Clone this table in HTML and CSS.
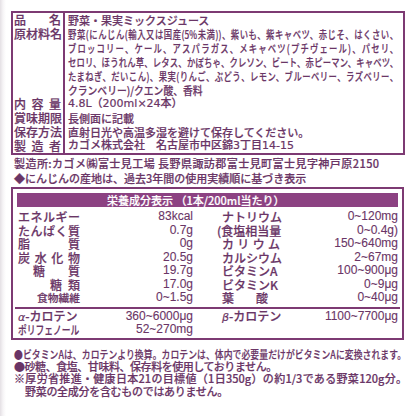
FILE: index.html
```html
<!DOCTYPE html>
<html lang="ja">
<head>
<meta charset="utf-8">
<title>野菜・果実ミックスジュース</title>
<link rel="stylesheet" href="styles.css">
</head>
<body>
<div class="page">
  <div class="spec">
    <div class="lbl">品名</div>
    <div class="val">野菜・果実ミックスジュース</div>

    <div class="lbl">原材料名</div>
    <div class="val">
      <div class="fit"><span class="fit-in">野菜(にんじん(輸入又は国産(5%未満))、紫いも、紫キャベツ、赤じそ、はくさい、</span></div>
      <div class="fit"><span class="fit-in">ブロッコリー、ケール、アスパラガス、メキャベツ(プチヴェール)、パセリ、</span></div>
      <div class="fit"><span class="fit-in">セロリ、ほうれん草、レタス、かぼちゃ、クレソン、ビート、赤ピーマン、キャベツ、</span></div>
      <div class="fit"><span class="fit-in">たまねぎ、だいこん)、果実(りんご、ぶどう、レモン、ブルーベリー、ラズベリー、</span></div>
      <div class="fit"><span class="fit-in short">クランベリー)/クエン酸、香料</span></div>
    </div>

    <div class="lbl">内容量</div>
    <div class="val latin">4.8L（200ml×24本）</div>

    <div class="lbl">賞味期限</div>
    <div class="val">長側面に記載</div>

    <div class="lbl">保存方法</div>
    <div class="val">直射日光や高温多湿を避けて保存してください。</div>

    <div class="lbl">製造者</div>
    <div class="val latin">カゴメ株式会社　名古屋市中区錦3丁目14-15</div>
  </div>

  <div class="maker">
    <div class="mline wide">製造所:カゴメ㈱富士見工場 長野県諏訪郡富士見町富士見字神戸原2150</div>
    <div class="mline">◆にんじんの産地は、過去3年間の使用実績順に基づき表示</div>
  </div>

  <div class="nutri">
    <div class="nhead">栄養成分表示 （1本/200ml当たり）</div>
    <div class="ncols">
      <div class="ncol nleft">
        <div class="nrow"><span class="nl">エネルギー</span><span class="nv">83kcal</span></div>
        <div class="nrow"><span class="nl">たんぱく質</span><span class="nv">0.7g</span></div>
        <div class="nrow"><span class="nl">脂質</span><span class="nv">0g</span></div>
        <div class="nrow"><span class="nl">炭水化物</span><span class="nv">20.5g</span></div>
        <div class="nrow"><span class="nl i1">糖質</span><span class="nv">19.7g</span></div>
        <div class="nrow"><span class="nl i2">糖類</span><span class="nv">17.0g</span></div>
        <div class="nrow"><span class="nl i3">食物繊維</span><span class="nv">0~1.5g</span></div>
      </div>
      <div class="ncol nright">
        <div class="nrow"><span class="nl">ナトリウム</span><span class="nv">0~120mg</span></div>
        <div class="nrow"><span class="nl paren">(食塩相当量</span><span class="nv">0~0.4g)</span></div>
        <div class="nrow"><span class="nl">カリウム</span><span class="nv">150~640mg</span></div>
        <div class="nrow"><span class="nl">カルシウム</span><span class="nv">2~67mg</span></div>
        <div class="nrow"><span class="nl free">ビタミンA</span><span class="nv">100~900μg</span></div>
        <div class="nrow"><span class="nl free">ビタミンK</span><span class="nv">0~9μg</span></div>
        <div class="nrow"><span class="nl narrow">葉酸</span><span class="nv">0~40μg</span></div>
      </div>
    </div>
    <div class="ncols extra">
      <div class="ncol nleft">
        <div class="nrow"><span class="nl free"><i class="gk">α</i>-カロテン</span><span class="nv">360~6000μg</span></div>
        <div class="nrow"><span class="nl free"><span class="squeeze">ポリフェノール</span></span><span class="nv">52~270mg</span></div>
      </div>
      <div class="ncol nright">
        <div class="nrow"><span class="nl free"><i class="gk">β</i>-カロテン</span><span class="nv">1100~7700μg</span></div>
      </div>
    </div>
  </div>

  <div class="notes">
    <div class="note"><span class="note-fit">●ビタミンAは、カロテンより換算。カロテンは、体内で必要量だけがビタミンAに変換されます。</span></div>
    <div class="note tight">●砂糖、食塩、甘味料、保存料を使用しておりません。</div>
    <div class="note just">※厚労省推進・健康日本21の目標値（1日350g）の約1/3である野菜120g分。</div>
    <div class="note indent">野菜の全成分を含むものではありません。</div>
  </div>
</div>
</body>
</html>
```

FILE: styles.css
```css
html {
  background: linear-gradient(to right, #e4e0e4 0, #f6f4f6 3px, #ffffff 6px);
}
body {
  margin: 0;
  color: #6a3566;
  font-family: "Noto Sans CJK JP", "Noto Sans", sans-serif;
  font-weight: 500;
  -webkit-text-stroke: 0.2px currentColor;
}
.page {
  width: 416px;
  height: 416px;
  padding: 11px 11px 0 11px;
  box-sizing: border-box;
  overflow: hidden;
}

/* ---- spec box ---- */
.spec {
  display: grid;
  grid-template-columns: 52px 1fr;
  border: 2px solid #7d3a73;
  width: 394px;
  box-sizing: border-box;
}
.lbl {
  border-right: 2px solid #7d3a73;
  padding: 0 2px 0 1px;
  font-size: 12px;
  line-height: 14px;
  text-align: justify;
  text-align-last: justify;
  white-space: nowrap;
}
.val {
  padding-left: 3px;
  font-size: 11px;
  line-height: 14px;
  white-space: nowrap;
}
.val.latin {
  font-family: "DejaVu Sans", "Noto Sans CJK JP", sans-serif;
}
.fit {
  width: 330px;
  height: 14px;
}
.fit-in {
  display: block;
  width: 436px;
  text-align: justify;
  text-align-last: justify;
  white-space: normal;
  transform: scaleX(0.757);
  transform-origin: 0 50%;
}
.fit-in.short {
  width: auto;
  text-align: left;
  text-align-last: left;
  white-space: nowrap;
  transform: scaleX(0.89);
}

/* ---- maker lines ---- */
.maker {
  margin-top: 1px;
  padding-left: 3px;
}
.mline {
  font-size: 11px;
  line-height: 15px;
  white-space: nowrap;
}
.mline.wide {
  letter-spacing: 0.45px;
}

/* ---- nutrition box ---- */
.nutri {
  margin-top: 1px;
  width: 393px;
  box-sizing: border-box;
  border: 2px solid #7d3a73;
  padding: 4px 4px 1px 4px;
}
.nhead {
  background: #8c4282;
  color: #ffffff;
  height: 14px;
  line-height: 14px;
  font-size: 11px;
  padding-left: 90px;
  white-space: nowrap;
}
.ncols {
  display: grid;
  grid-template-columns: 176px 1fr;
  padding-top: 3px;
}
.ncols.extra {
  border-top: 2px solid #7d3a73;
  margin: 2px -2px 0 -2px;
  padding: 1px 2px 0 2px;
}
.nleft {
  padding-left: 1px;
}
.nright {
  padding-left: 29px;
}
.nrow {
  display: flex;
  justify-content: space-between;
  align-items: center;
  height: 13.5px;
  line-height: 13.5px;
  white-space: nowrap;
}
.nl {
  display: block;
  width: 62px;
  font-size: 12px;
  text-align: justify;
  text-align-last: justify;
}
.nright .nl {
  width: 58px;
}
.nright .nl.narrow {
  width: 46px;
}
.nl.i1 {
  margin-left: 15px;
  width: 47px;
}
.nl.i2 {
  margin-left: 32px;
  width: 30px;
}
.nl.i3 {
  margin-left: 19px;
  width: 43px;
  font-size: 10.75px;
}
.nright .nl.paren {
  margin-left: -5px;
  width: 63px;
  text-align-last: left;
}
.nl.free,
.nright .nl.free {
  width: auto;
  text-align-last: left;
}
.squeeze {
  display: inline-block;
  width: 61px;
  transform: scaleX(0.73);
  transform-origin: 0 50%;
}
.gk {
  font-family: "DejaVu Sans", sans-serif;
  font-style: italic;
  font-size: 11px;
}
.nv {
  font-family: "Liberation Sans", sans-serif;
  font-size: 12px;
  font-weight: 400;
  -webkit-text-stroke: 0.1px currentColor;
}

/* ---- notes ---- */
.notes {
  margin-top: 8px;
  padding-left: 3px;
}
.note {
  font-size: 11px;
  line-height: 12.4px;
  height: 12.4px;
  white-space: nowrap;
}
.note-fit {
  display: block;
  width: 490px;
  text-align: justify;
  text-align-last: justify;
  white-space: normal;
  transform: scaleX(0.8);
  transform-origin: 0 50%;
}
.note.tight {
  letter-spacing: -0.45px;
}
.note.just {
  width: 393px;
  white-space: normal;
  text-align: justify;
  text-align-last: justify;
}
.note.indent {
  padding-left: 11px;
  letter-spacing: -0.3px;
}
```
